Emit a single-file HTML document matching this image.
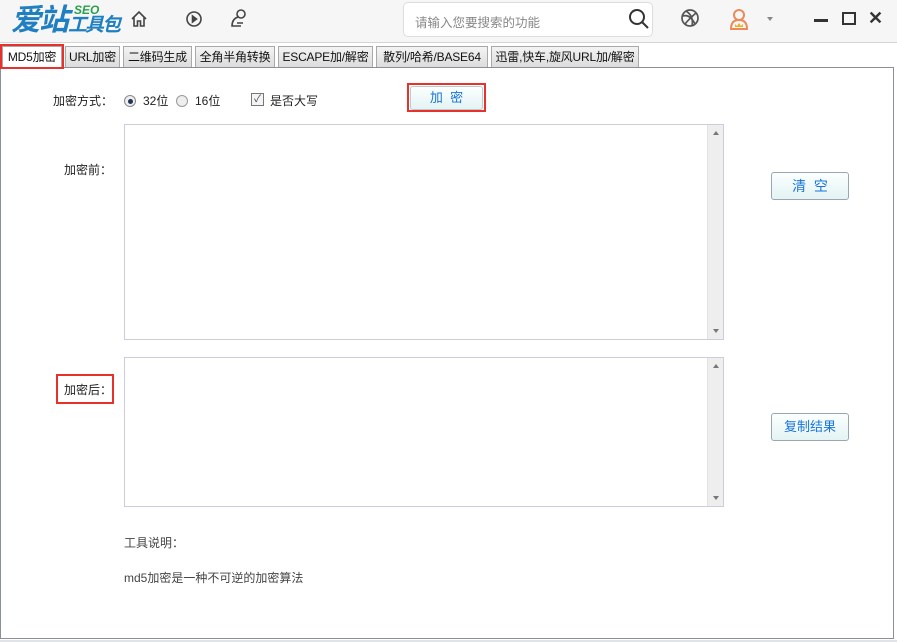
<!DOCTYPE html>
<html><head><meta charset="utf-8"><style>
*{box-sizing:border-box;margin:0;padding:0}
body{width:897px;height:642px;background:#fff;font-family:"Liberation Sans","Noto Sans CJK SC",sans-serif;font-size:12px;color:#222;position:relative;overflow:hidden}
.abs{position:absolute}
.hdr{left:0;top:0;width:897px;height:43px;background:#f6f6f6;border-bottom:1px solid #d4d4d4}
.tab{position:absolute;top:46px;height:21px;background:linear-gradient(#f4f4f4,#dcdcdc);border:1px solid #a9a9a9;border-bottom:none;font-size:12px;line-height:20px;text-align:center;color:#111;white-space:nowrap;overflow:hidden;letter-spacing:-0.2px}
.ta{border:1px solid #ccd;background:#fff}
.sb{position:absolute;right:0;top:0;bottom:0;width:16px;background:#eee;border-left:1px solid #e2e2e2}
.btn{position:absolute;border:1px solid #9aa6b4;border-radius:3px;background:linear-gradient(#fbffff,#e4f3f3);color:#1874d8;font-size:13px;text-align:center}
.red{position:absolute;border:2px solid #e8302c}
</style></head><body>
<div class="abs hdr"></div>
<div class="abs" style="left:11px;top:3px;font-size:30px;line-height:36px;font-weight:bold;font-style:italic;color:#1f7fc0;letter-spacing:-2px">爱站</div>
<div class="abs" style="left:74px;top:4px;font-size:12px;line-height:12px;font-weight:bold;font-style:italic;color:#2aa050">SEO</div>
<div class="abs" style="left:68px;top:15px;font-size:19px;line-height:22px;font-weight:bold;font-style:italic;color:#1f7fc0;letter-spacing:-2px">工具包</div>
<svg class="abs" style="left:129px;top:9px" width="20" height="20" viewBox="0 0 20 20" fill="none" stroke="#444" stroke-width="1.6"><path d="M3 10 L10 3 L17 10 M5 8 V17 H8.5 V12 H11.5 V17 H15 V8"/></svg>
<svg class="abs" style="left:185px;top:10px" width="18" height="18" viewBox="0 0 18 18" fill="none" stroke="#444" stroke-width="1.6"><circle cx="9" cy="9" r="7"/><path d="M7.5 6 L11.5 9 L7.5 12Z" fill="#444"/></svg>
<svg class="abs" style="left:229px;top:8px" width="20" height="20" viewBox="0 0 20 20" fill="none" stroke="#444" stroke-width="1.6"><circle cx="12" cy="6" r="4"/><path d="M9 9 Q3 11 3 18 H12 M8 15 H14"/></svg>
<div class="abs" style="left:403px;top:2px;width:250px;height:35px;background:#fff;border:1px solid #ddd;border-radius:5px"></div>
<div class="abs" style="left:415px;top:12px;font-size:12.5px;color:#888">请输入您要搜索的功能</div>
<svg class="abs" style="left:628px;top:8px" width="22" height="22" viewBox="0 0 22 22" fill="none" stroke="#333" stroke-width="2"><circle cx="9" cy="9" r="7"/><path d="M14 14 L20 20"/></svg>
<svg class="abs" style="left:680px;top:8px" width="22" height="22" viewBox="0 0 22 22" fill="none" stroke="#555" stroke-width="1.7"><circle cx="10" cy="10" r="8"/><path d="M3 8 Q10 6 15 16 M6 3 Q14 8 12 18 M16 5 Q9 11 5 16"/></svg>
<svg class="abs" style="left:728px;top:7px" width="22" height="24" viewBox="0 0 22 24" fill="none" stroke="#ec8a5a" stroke-width="2"><circle cx="11" cy="8" r="5"/><path d="M3 22 Q3 13 11 13 Q19 13 19 22Z"/><path d="M7 17 L9 19 L11 16 L13 19 L15 17 V20 H7Z" fill="#f0b020" stroke="none"/></svg>
<div class="abs" style="left:767px;top:17px;width:0;height:0;border:3.5px solid transparent;border-top:4px solid #888"></div>
<div class="abs" style="left:814px;top:19px;width:14px;height:3px;background:#333"></div>
<div class="abs" style="left:842px;top:12px;width:14px;height:13px;border:2.5px solid #333"></div>
<div class="abs" style="left:868px;top:8px;font-size:18px;font-weight:bold;color:#333">✕</div>

<div class="abs" style="left:0;top:67px;width:894px;height:572px;border:1px solid #8a8f98"></div>
<div class="abs" style="left:0;top:640px;width:897px;height:2px;background:#e0e3e8"></div>
<div class="tab" style="left:2px;width:60px;background:#fff;height:22px;border-bottom:1px dotted #333">MD5加密</div>
<div class="red" style="left:0;top:44px;width:64px;height:25px"></div>
<div class="tab" style="left:65px;width:55px">URL加密</div>
<div class="tab" style="left:123px;width:69px">二维码生成</div>
<div class="tab" style="left:195px;width:80px">全角半角转换</div>
<div class="tab" style="left:278px;width:95px">ESCAPE加/解密</div>
<div class="tab" style="left:376px;width:112px">散列/哈希/BASE64</div>
<div class="tab" style="left:491px;width:148px">迅雷,快车,旋风URL加/解密</div>

<div class="abs" style="left:53px;top:92px">加密方式：</div>
<div class="abs" style="left:124px;top:95px;width:12px;height:12px;border:1px solid #888;border-radius:50%;background:#eee"><div style="margin:2.5px;width:5px;height:5px;border-radius:50%;background:#235"></div></div>
<div class="abs" style="left:143px;top:92px">32位</div>
<div class="abs" style="left:176px;top:95px;width:12px;height:12px;border:1px solid #999;border-radius:50%;background:#eee"></div>
<div class="abs" style="left:195px;top:92px">16位</div>
<div class="abs" style="left:251px;top:93px;width:13px;height:13px;border:1px solid #777;background:#f4f4f4;font-size:10px;line-height:11px;text-align:center;color:#345">✓</div>
<div class="abs" style="left:270px;top:92px">是否大写</div>
<div class="btn" style="left:410px;top:86px;width:73px;height:24px;line-height:22px;border-color:#bcc">加&nbsp;&nbsp;密</div>
<div class="red" style="left:407px;top:83px;width:79px;height:29px"></div>

<div class="abs" style="left:64px;top:161px">加密前：</div>
<div class="abs ta" style="left:124px;top:124px;width:600px;height:216px"><div class="sb"><div style="margin:6px auto;width:0;border:3px solid transparent;border-bottom:4px solid #777;border-top:none"></div><div style="position:absolute;bottom:6px;left:5px;border:3px solid transparent;border-top:4px solid #777;border-bottom:none"></div></div></div>
<div class="btn" style="left:771px;top:172px;width:78px;height:28px;line-height:26px;font-size:14px">清&nbsp;&nbsp;空</div>

<div class="abs" style="left:64px;top:381px">加密后：</div>
<div class="red" style="left:56px;top:374px;width:58px;height:30px"></div>
<div class="abs ta" style="left:124px;top:357px;width:600px;height:150px"><div class="sb"><div style="margin:6px auto;width:0;border:3px solid transparent;border-bottom:4px solid #777;border-top:none"></div><div style="position:absolute;bottom:6px;left:5px;border:3px solid transparent;border-top:4px solid #777;border-bottom:none"></div></div></div>
<div class="btn" style="left:771px;top:413px;width:78px;height:28px;line-height:26px">复制结果</div>

<div class="abs" style="left:124px;top:534px;color:#444">工具说明：</div>
<div class="abs" style="left:124px;top:569px;color:#444">md5加密是一种不可逆的加密算法</div>
</body></html>
